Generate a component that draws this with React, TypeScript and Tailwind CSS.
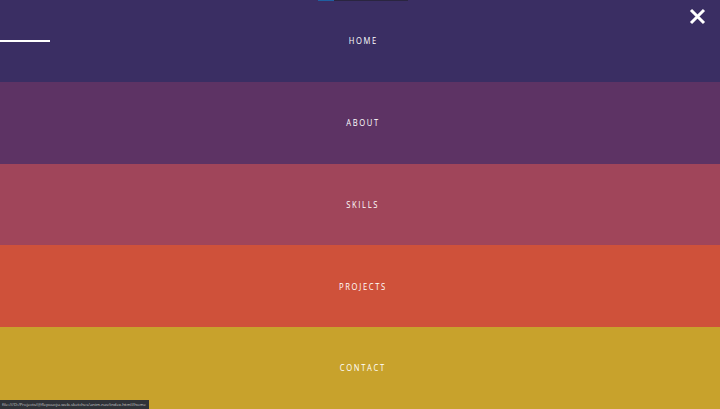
import React from "react";

const items = [
  { label: "HOME", bg: "bg-[#3a2e63]" },
  { label: "ABOUT", bg: "bg-[#5d3364]" },
  { label: "SKILLS", bg: "bg-[#a0455a]" },
  { label: "PROJECTS", bg: "bg-[#cf513a]" },
  { label: "CONTACT", bg: "bg-[#c8a22c]" },
];

export default function App() {
  return (
    <div className="relative w-[720px] h-[409px] overflow-hidden flex flex-col" style={{ fontFamily: '"Open Sans", "Liberation Sans", sans-serif' }}>
      {items.map((it, i) => (
        <div key={it.label} className={`${it.bg} flex-1 flex items-center justify-center relative`}>
          <span className="text-white text-[9.5px] tracking-[0.22em] leading-none scale-x-[0.8] translate-x-[3px]">{it.label}</span>
          {i === 0 && <div className="absolute left-0 top-[40px] w-[50px] h-[2px] bg-white" />}
        </div>
      ))}
      <div className="absolute top-0 left-[318px] flex h-[1px]">
        <div className="w-[16px] bg-[#1f5fa0]" />
        <div className="w-[74px] bg-[#2a2540]" />
      </div>
      <svg className="absolute left-[689px] top-[8px]" width="17" height="17" viewBox="0 0 17 17">
        <path d="M2 2 L15 15 M15 2 L2 15" stroke="white" strokeWidth="3" strokeLinecap="butt" />
      </svg>
      <div className="absolute left-0 bottom-0 h-[9px] w-[149px] bg-[#2f3238] text-[#c8c8c8] text-[4.3px] leading-[9px] px-[2px] whitespace-nowrap">
        file:///D:/Projects/@flepoucju-web-sketches/anim-nav/index.html#home
      </div>
    </div>
  );
}
